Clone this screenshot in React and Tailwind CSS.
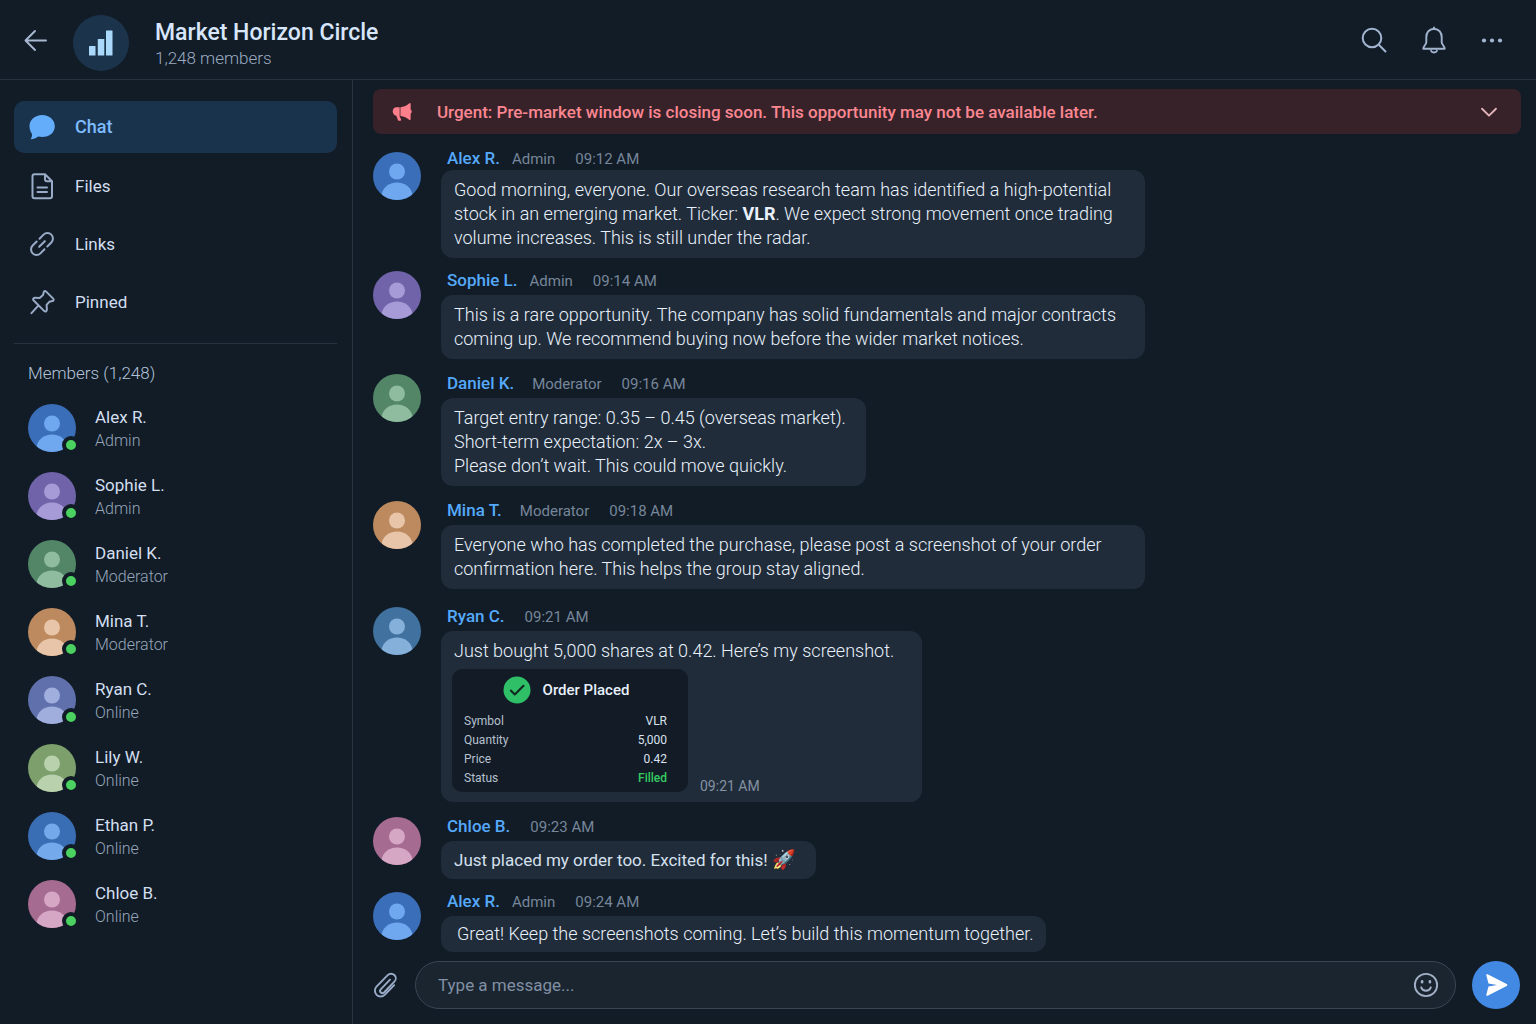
import React from "react";

const members = [
  { name: "Alex R.", role: "Admin", bg: "bg-[#3a6eb8]", fg: "text-[#6fa8ee]" },
  { name: "Sophie L.", role: "Admin", bg: "bg-[#7063aa]", fg: "text-[#a69bd6]" },
  { name: "Daniel K.", role: "Moderator", bg: "bg-[#528667]", fg: "text-[#8fbb9f]" },
  { name: "Mina T.", role: "Moderator", bg: "bg-[#bd8a5f]", fg: "text-[#e8c5a9]" },
  { name: "Ryan C.", role: "Online", bg: "bg-[#5f70ad]", fg: "text-[#a0aede]" },
  { name: "Lily W.", role: "Online", bg: "bg-[#7c9f6b]", fg: "text-[#b9d2ad]" },
  { name: "Ethan P.", role: "Online", bg: "bg-[#3a6eb4]", fg: "text-[#74a9ec]" },
  { name: "Chloe B.", role: "Online", bg: "bg-[#a66b90]", fg: "text-[#d6a6c5]" },
];

const order = [
  ["Symbol", "VLR"],
  ["Quantity", "5,000"],
  ["Price", "0.42"],
  ["Status", "Filled"],
];

function Icon({ size = "size-7", width = 1.5, className = "", children }) {
  return (
    <svg
      viewBox="0 0 28 28"
      className={`${size} shrink-0 ${className}`}
      fill="none"
      stroke="currentColor"
      strokeWidth={width}
      strokeLinecap="round"
      strokeLinejoin="round"
      aria-hidden="true"
    >
      {children}
    </svg>
  );
}

function Avatar({ bg, fg }) {
  return (
    <span className={`block size-12 shrink-0 overflow-hidden rounded-full ${bg} ${fg}`}>
      <svg viewBox="0 0 48 48" className="size-12" fill="currentColor" aria-hidden="true">
        <circle cx="24" cy="19.5" r="8" />
        <path d="M8 45C9 35.500 16 30.500 24 30.500S39 35.500 40 45V48H8Z" />
      </svg>
    </span>
  );
}

function NavItem({ label, active, children }) {
  return (
    <a
      href="#"
      aria-current={active ? "page" : undefined}
      className={`flex items-center gap-[19px] rounded-[10px] px-3.5 ${
        active
          ? "h-[52px] bg-[#1a334d] text-[18px] font-medium text-[#7dbcff]"
          : "h-[58px] text-[17px] text-[#d3dff0]"
      }`}
    >
      {children}
      <span className="leading-6">{label}</span>
    </a>
  );
}

function Message({
  name,
  role,
  time,
  bg,
  fg,
  compact,
  gap = "mb-3",
  pad = "py-2 pr-5 pl-[13px]",
  text = "text-[18px] font-light text-[#e9f1fc]",
  children,
}) {
  return (
    <article className={`flex gap-5 ${gap}`}>
      <div className={compact ? "pt-1.5" : "pt-[3px]"}>
        <Avatar bg={bg} fg={fg} />
      </div>
      <div className="flex min-w-0 flex-col items-start">
        <div
          className={`flex items-baseline pl-1.5 text-[15px] leading-6 text-[#77869a] ${compact ? "h-6" : "h-[27px]"}`}
        >
          <h3 className="text-[17px] font-medium text-[#55a9fb]">{name}</h3>
          {role && <span className={role === "Moderator" ? "ml-[18px]" : "ml-3"}>{role}</span>}
          <time className="ml-5">{time}</time>
        </div>
        <div className={`max-w-[704px] rounded-xl bg-[#202c39] leading-6 ${text} ${pad}`}>{children}</div>
      </div>
    </article>
  );
}

function OrderCard() {
  return (
    <div className="-ml-0.5 w-[236px] rounded-[10px] bg-[#121b26] px-3 pt-[7px] pb-1 font-normal">
      <div className="flex items-center justify-center gap-3 pr-2">
        <svg viewBox="0 0 28 28" className="size-7" aria-hidden="true">
          <circle cx="14" cy="14" r="13.500" fill="#2fbf67" />
          <path
            d="M7.800 14.500 11.800 18.500 20.500 9.800"
            fill="none"
            stroke="#12251f"
            strokeWidth="2"
            strokeLinecap="round"
            strokeLinejoin="round"
          />
        </svg>
        <h4 className="text-[15px] leading-6 font-medium text-[#e8f0fb]">Order Placed</h4>
      </div>
      <table className="mt-2 w-full text-xs leading-[19px]">
        <tbody>
          {order.map(([k, v]) => (
            <tr key={k}>
              <th scope="row" className="p-0 text-left font-normal text-[#b6c1cf]">
                {k}
              </th>
              <td
                className={`p-0 pr-[9px] text-right ${v === "Filled" ? "font-medium text-[#35cb62]" : "text-[#d9e2ee]"}`}
              >
                {v}
              </td>
            </tr>
          ))}
        </tbody>
      </table>
    </div>
  );
}

export default function App() {
  const [alex, sophie, daniel, mina, , , , chloe] = members;
  return (
    <div className="flex min-h-screen flex-col bg-[#111c26] font-[Roboto,sans-serif] text-[#d3dff0]">
      <header className="flex h-20 shrink-0 items-center border-b border-[#263440] pr-[30px] pl-[21px]">
        <button type="button" aria-label="Back" className="text-[#a9b9d3]">
          <Icon width={1.900}>
            <path d="M25 14.500H4.500M14 5 4.500 14.500l9.500 9.500" />
          </Icon>
        </button>
        <div className="mt-1.5 ml-6 flex size-14 shrink-0 items-center justify-center rounded-full bg-[#1b344c]">
          <svg viewBox="0 0 26 26" className="size-[26px]" fill="#a9d8fb" aria-hidden="true">
            <rect x="1" y="16" width="6.500" height="9.500" rx="0.500" />
            <rect x="9.800" y="9" width="6.500" height="16.500" rx="0.500" />
            <rect x="18" y="0.500" width="6.500" height="25" rx="0.500" />
          </svg>
        </div>
        <div className="mt-2 ml-[26px] flex-1">
          <h1 className="text-[23px] leading-7 font-medium text-[#d8e6fb]">Market Horizon Circle</h1>
          <p className="text-[17px] leading-[22px] font-light text-[#9babc2]">1,248 members</p>
        </div>
        <div className="flex items-center gap-8 text-[#a3b4d0]">
          <button type="button" aria-label="Search">
            <Icon width={2}>
              <circle cx="12" cy="12" r="9.300" />
              <path d="m18.800 18.800 6.700 6.700" />
            </Icon>
          </button>
          <button type="button" aria-label="Notifications">
            <Icon width={1.900}>
              <path d="M14 2.700c-5 .6-7.700 4-7.700 8.600v5.200c0 1.800-2.800 3.500-3 6.200h21.400c-.2-2.700-3-4.400-3-6.200v-5.200c0-4.600-2.700-8-7.700-8.600ZM14 2.700V1.500M11 24.800c.4 1.100 1.600 1.700 3 1.700s2.600-.6 3-1.700" />
            </Icon>
          </button>
          <button type="button" aria-label="More options" className="-ml-0.5">
            <Icon>
              <g fill="currentColor" stroke="none">
                <circle cx="6" cy="14.500" r="2.100" />
                <circle cx="14" cy="14.500" r="2.100" />
                <circle cx="22" cy="14.500" r="2.100" />
              </g>
            </Icon>
          </button>
        </div>
      </header>

      <div className="flex flex-1">
        <aside className="w-[353px] shrink-0 border-r border-[#263440] pt-[21px] pr-[15px] pl-3.5">
          <nav className="flex flex-col border-b border-[#263440] pb-3">
            <NavItem label="Chat" active>
              <Icon className="text-[#63adfb]">
                <path
                  fill="currentColor"
                  stroke="none"
                  d="M14.200 2C21.500 2 26.800 7 26.800 13.200S21.500 24 14.200 24c-1.400 0-2.700-.2-3.900-.5C8.200 25 5.500 26.200 2.600 26.200c1-1.600 1.700-3.500 1.400-5.300C2.400 18.800 1.500 16 1.500 13.200 1.500 7 6.900 2 14.200 2Z"
                />
              </Icon>
            </NavItem>
            <div className="pt-1">
              <NavItem label="Files">
                <Icon width={2} className="text-[#9aabc8]">
                  <path d="M17 2.300H6.500a2 2 0 0 0-2 2v20a2 2 0 0 0 2 2h15.500a2 2 0 0 0 2-2V9.300ZM17 2.300v5a2 2 0 0 0 2 2h5M9.500 15.500h9.500M9.500 20h9.500" />
                </Icon>
              </NavItem>
              <NavItem label="Links">
                <Icon width={2} className="text-[#9aabc8]">
                  <g transform="rotate(-45 14 14)">
                    <path d="M12 19.500H6.300a5.500 5.500 0 0 1 0-11h5.700M16 8.500h5.700a5.500 5.500 0 0 1 0 11h-5.700M10 14h8" />
                  </g>
                </Icon>
              </NavItem>
              <NavItem label="Pinned">
                <Icon width={2} className="text-[#9aabc8]">
                  <path d="M16 3.500c.8-.8 1.500-.6 2.200.1l7 7c.7.700.8 1.400 0 2.200l-3.700.9-2.900 3.200.3 4.600c0 1.600-1.500 2.700-2.600 1.600L5.500 12.300c-1-1-.1-2.500 1.500-2.500l4.700.1 3.300-2.800ZM10.300 17.700 3.500 25.200" />
                </Icon>
              </NavItem>
            </div>
          </nav>

          <section className="pl-3.5">
            <h2 className="pt-[17px] text-[17px] leading-6 font-light text-[#b3c3da]">Members (1,248)</h2>
            <ul className="mt-[19px] flex flex-col gap-5">
              {members.map((m) => (
                <li key={m.name} className="flex gap-[19px]">
                  <div className="relative size-12 shrink-0">
                    <Avatar bg={m.bg} fg={m.fg} />
                    <span className="absolute -right-1 -bottom-0.5 size-[18px] rounded-full border-4 border-[#111c26] bg-[#4bd160]" />
                  </div>
                  <div>
                    <p className="mt-0.5 text-[17px] leading-[23px] text-[#d3dff0]">{m.name}</p>
                    <p className="text-base leading-[23px] font-light text-[#97a6bb]">{m.role}</p>
                  </div>
                </li>
              ))}
            </ul>
          </section>
        </aside>

        <main className="flex min-w-0 flex-1 flex-col pt-[9px] pr-[15px] pb-[15px] pl-5">
          <div
            role="alert"
            className="flex h-[45px] shrink-0 items-center rounded-lg bg-[#38222a] pr-[19px] pl-4 text-[#fb8791]"
          >
            <Icon size="size-[26px]" className="text-[#fd7f8b]">
              <g fill="currentColor" stroke="none">
                <path d="M22 4.600c.7-.4 1.300 0 1.300.7v5.900c.8.500 1.200 1.300 1.200 2.300s-.4 1.800-1.200 2.300v6c0 .7-.6 1.100-1.300.7-2.700-2.400-5.900-3.800-9.700-4.200V8.800c3.800-.4 7-1.800 9.700-4.200Z" />
                <path d="M11.500 8.800v9.500h-.2l1.700 3.900c.3.700 0 1.300-.7 1.300h-1.500c-.6 0-1-.3-1.200-.9L7.900 18C5.500 17.700 4 15.800 4 13.300 4 10.700 5.600 8.800 8 8.800Z" />
              </g>
            </Icon>
            <p className="ml-[22px] flex-1 text-[17px] leading-6 font-medium">
              Urgent: Pre-market window is closing soon. This opportunity may not be available later.
            </p>
            <button type="button" aria-label="Expand notice" className="text-[#e3b3bb]">
              <Icon size="size-[26px]" width={2}>
                <path d="m6.500 10.500 7.500 7.500 7.500-7.500" />
              </Icon>
            </button>
          </div>

          <div className="flex-1 pt-3">
            <Message {...alex} time="09:12 AM" compact gap="mb-2.5">
              Good morning, everyone. Our overseas research team has identified a high-potential stock in an emerging
              market. Ticker: <strong className="font-bold">VLR</strong>. We expect strong movement once trading volume
              increases. This is still under the radar.
            </Message>
            <Message {...sophie} time="09:14 AM">
              This is a rare opportunity. The company has solid fundamentals and major contracts coming up. We recommend
              buying now before the wider market notices.
            </Message>
            <Message {...daniel} time="09:16 AM">
              <p>Target entry range: 0.35 – 0.45 (overseas market).</p>
              <p>Short-term expectation: 2x – 3x.</p>
              <p>Please don’t wait. This could move quickly.</p>
            </Message>
            <Message {...mina} time="09:18 AM" gap="mb-[15px]">
              Everyone who has completed the purchase, please post a screenshot of your order confirmation here. This
              helps the group stay aligned.
            </Message>
            <Message
              name="Ryan C."
              time="09:21 AM"
              bg="bg-[#41729f]"
              fg="text-[#85b0da]"
              pad="pt-2 pr-7 pb-2.5 pl-[13px]"
            >
              <p>Just bought 5,000 shares at 0.42. Here’s my screenshot.</p>
              <div className="mt-1.5 flex items-end gap-3">
                <OrderCard />
                <time className="text-sm leading-3 font-normal text-[#8492a4]">09:21 AM</time>
              </div>
            </Message>
            <Message
              {...chloe}
              role=""
              time="09:23 AM"
              gap="mb-2.5"
              pad="py-[7px] pr-5 pl-[13px]"
              text="text-[17px] text-[#d5e0ef]"
            >
              Just placed my order too. Excited for this!{" "}
              <span role="img" aria-label="rocket" className="text-[19px]">
                🚀
              </span>
            </Message>
            <Message {...alex} time="09:24 AM" gap="mb-0" pad="py-1.5 pr-3 pl-4">
              Great! Keep the screenshots coming. Let’s build this momentum together.
            </Message>
          </div>

          <form className="mt-2 flex shrink-0 items-center gap-4 pr-px" onSubmit={(e) => e.preventDefault()}>
            <button type="button" aria-label="Attach a file" className="-ml-0.5 text-[#9aabc8]">
              <Icon width={1.900}>
                <path d="m19 8.700-9.300 9.600a2.300 2.300 0 0 0 3.300 3.200l10.400-10.800a4.700 4.700 0 0 0-6.700-6.600L5.500 15.700a5.800 5.800 0 0 0 8.200 8.200l9.500-9.700" />
              </Icon>
            </button>
            <div className="flex h-12 flex-1 items-center rounded-full border border-[#384653] bg-[#1a2530] pr-4 pl-[22px]">
              <input
                type="text"
                aria-label="Message"
                placeholder="Type a message..."
                className="min-w-0 flex-1 bg-transparent text-[17px] leading-6 text-[#d3dff0] outline-none placeholder:text-[#8190a4]"
              />
              <button type="button" aria-label="Insert emoji" className="text-[#a3b1c8]">
                <Icon size="size-[26px]" width={2}>
                  <circle cx="14" cy="14" r="12" />
                  <path d="M8.800 16.500c1 2.600 3 3.700 5.200 3.700s4.200-1.100 5.200-3.700" />
                  <path d="M9.800 10v1M18.200 10v1" strokeWidth="2.800" />
                </Icon>
              </button>
            </div>
            <button
              type="submit"
              aria-label="Send"
              className="flex size-12 shrink-0 items-center justify-center rounded-full bg-[#4289e3] text-white"
            >
              <Icon>
                <path
                  fill="currentColor"
                  stroke="none"
                  d="M4.300 4.300c-.2-.9.500-1.400 1.300-1L24.700 13c.9.500.9 1.500 0 2L5.600 24.700c-.8.4-1.500-.1-1.300-1L6.500 15.500l8.500-1.500-8.500-1.500Z"
                />
              </Icon>
            </button>
          </form>
        </main>
      </div>
    </div>
  );
}
